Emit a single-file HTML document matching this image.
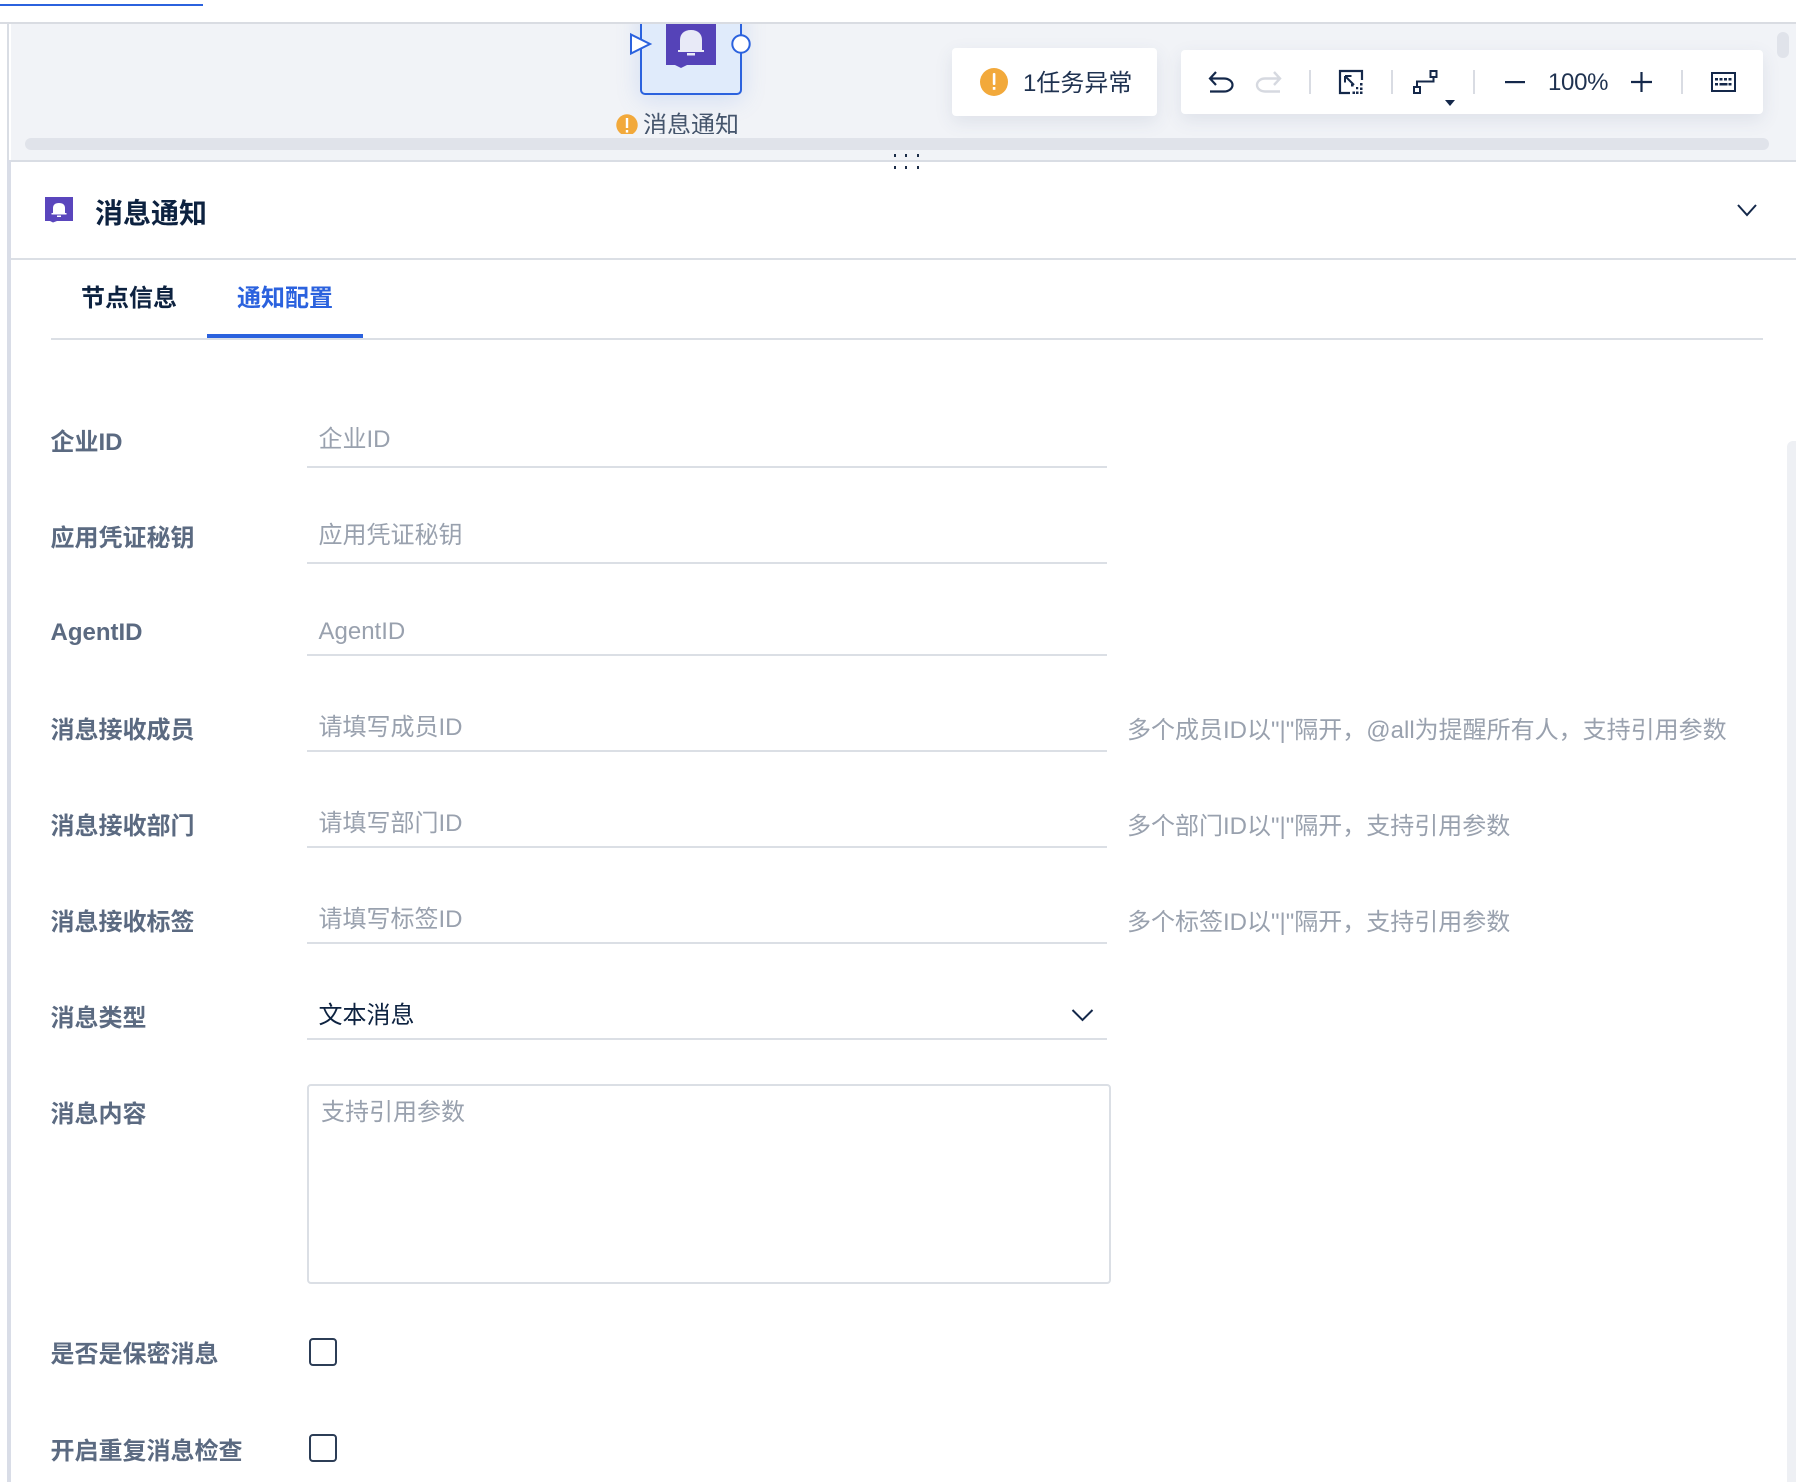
<!DOCTYPE html>
<html lang="zh">
<head>
<meta charset="utf-8">
<title>消息通知</title>
<style>
html,body{margin:0;padding:0;background:#fff}
#p{position:relative;width:1796px;height:1482px;overflow:hidden;background:#fff;font-family:"Liberation Sans","Noto Sans CJK SC",sans-serif;font-size:24px;color:#0d2240}
#p div{position:absolute}
.t{white-space:nowrap;line-height:30px;height:30px}
.l{left:50.500px;font-weight:700;color:#5b6a81}
.h{left:318.500px;color:#99a1ae}
.n{left:1127px;color:#99a1ae}
.u{left:307px;width:800px;height:2px;background:#dbdfe5}
.s{width:2px;height:24px;top:70px;background:#d9dce3}
.c{left:309px;width:24px;height:24px;border:2px solid #2c3d56;border-radius:4px;background:#fff}
</style>
</head>
<body>
<div id="p">
  <div style="left:0;top:4px;width:203px;height:2px;background:#2b62de"></div>
  <div style="left:0;top:22px;width:1796px;height:2px;background:#d9dce2"></div>
  <div style="left:7px;top:24px;width:2px;height:136px;background:#d9dde4"></div>
  <div style="left:9px;top:24px;width:2px;height:136px;background:#fff"></div>
  <div style="left:7px;top:160px;width:4px;height:1322px;background:#d9dde7"></div>

  <div style="left:11px;top:24px;width:1785px;height:136px;background:#f1f3f7;overflow:hidden">
    <div style="left:629px;top:-20px;width:98px;height:87px;background:#e0ebfb;border:2px solid #2b62de;border-radius:5px;box-shadow:0 4px 24px rgba(90,140,230,.22)"></div>
    <div class="t" style="left:632px;top:87px;height:23px;overflow:hidden;color:#45556c">消息通知</div>
    <div style="left:14px;top:114px;width:1744px;height:12px;border-radius:6px;background:#e0e3ea"></div>
    <div style="left:1766px;top:8px;width:12px;height:26px;border-radius:6px;background:#e0e3ea"></div>
    <div style="left:941px;top:24px;width:205px;height:68px;background:#fff;border-radius:4px;box-shadow:0 6px 18px rgba(60,80,120,.10)"></div>
    <div style="left:1170px;top:26px;width:582px;height:64px;background:#fff;border-radius:4px;box-shadow:0 6px 18px rgba(60,80,120,.10)"></div>
  </div>

  <svg style="position:absolute;left:0;top:0" width="1796" height="1482" viewBox="0 0 1796 1482" fill="none">
    <!-- node icon -->
    <path d="M666 24h50v41h-29l-6 3-6-3h-9z" fill="#5543b8"/>
    <path d="M680 50V40c0-6 4-10 11-10s11 4 11 10v10z" fill="#e8eaf7"/>
    <rect x="678" y="50" width="26" height="2" fill="#e8eaf7"/>
    <rect x="687" y="53" width="8" height="2.500" fill="#e8eaf7"/>
    <path d="M631 34.500L650 44 631 53.500z" fill="#fff" stroke="#2b62de" stroke-width="2"/>
    <circle cx="741" cy="44" r="8.700" fill="#fff" stroke="#2b62de" stroke-width="2"/>
    <!-- label warning -->
    <path d="M621.200 134a10.700 10.700 0 1 1 11.600 0z" fill="#f2a93b"/>
    <rect x="625.800" y="118" width="2.400" height="10" fill="#fff"/>
    <rect x="625.800" y="130" width="2.400" height="2.600" fill="#fff"/>
    <!-- drag dots -->
    <path d="M894 154h2v3h-2zM905 154h2v3h-2zM917 154h2v3h-2zM894 166h2v3h-2zM905 166h2v3h-2zM917 166h2v3h-2z" fill="#1b2c47"/>
    <!-- alert icon -->
    <circle cx="994" cy="82" r="14" fill="#f2a93b"/>
    <rect x="992.800" y="73" width="2.600" height="12" rx="1" fill="#fff"/>
    <rect x="992.800" y="87" width="2.600" height="2.800" fill="#fff"/>
    <!-- undo -->
    <path d="M1216 72l-6 6.500 6 6.500M1210 78.500h14a8.500 6.500 0 0 1 0 13h-14" stroke="#14284a" stroke-width="2.200"/>
    <!-- redo -->
    <path d="M1274 72l6 6.500-6 6.500M1280 78.500h-15a8 6.500 0 0 0 0 13h15" stroke="#d6d9e0" stroke-width="2.400"/>
    <!-- fit -->
    <path d="M1362 80V71h-22v22h10" stroke="#14284a" stroke-width="2.200"/>
    <path d="M1345 76l9 9M1345 76h6.500M1345 76v6.500" stroke="#14284a" stroke-width="2"/>
    <path d="M1351 84h2.500v2.500h-2.500zM1360 83h2.500v2.500h-2.500zM1360 87.500h2.500v2.500h-2.500zM1360 91.500h2.500v2.500h-2.500zM1356 91.500h2.500v2.500h-2.500zM1352.500 91.500h2.500v2.500h-2.500zM1356 87h2.200v2.200h-2.200z" fill="#14284a"/>
    <!-- route -->
    <rect x="1430.500" y="71" width="6" height="6" stroke="#14284a" stroke-width="2"/>
    <rect x="1414" y="87" width="6" height="6" stroke="#14284a" stroke-width="2"/>
    <path d="M1433.500 78v3.500h-16.500v4.500" stroke="#14284a" stroke-width="2"/>
    <path d="M1445 100h10l-5 6z" fill="#14284a"/>
    <!-- zoom -->
    <rect x="1505" y="81" width="20" height="2.200" fill="#14284a"/>
    <path d="M1631 82h21M1641.500 72v20" stroke="#14284a" stroke-width="2.200"/>
    <!-- keyboard -->
    <rect x="1712" y="73" width="23" height="18" stroke="#14284a" stroke-width="2"/>
    <path d="M1715 78h3v2.500h-3zM1719.500 78h3v2.500h-3zM1724 78h3v2.500h-3zM1728.500 78h3v2.500h-3zM1715 83h3v2.500h-3zM1719.500 83h8v2.500h-8zM1728.500 83h3v2.500h-3z" fill="#14284a"/>
    <!-- panel icon -->
    <path d="M45 197h28v24h-16l-4 1.500-3-1.500h-5z" fill="#5a46bd"/>
    <path d="M53 213v-5c0-3 2-5 6-5s6 2 6 5v5z" fill="#fff"/>
    <rect x="51.500" y="213" width="15" height="1.500" fill="#fff"/>
    <rect x="57" y="215.500" width="4" height="1.500" fill="#fff"/>
    <!-- panel chevron -->
    <path d="M1738 205l9 10 9-10" stroke="#14284a" stroke-width="2"/>
    <!-- select chevron -->
    <path d="M1072.500 1010l10 10 10-10" stroke="#14284a" stroke-width="2"/>
  </svg>

  <div class="t" style="left:1023px;top:69px;color:#1f3250">1任务异常</div>
  <div class="s" style="left:1309px"></div>
  <div class="s" style="left:1391px"></div>
  <div class="s" style="left:1473px"></div>
  <div class="s" style="left:1681px"></div>
  <div class="t" style="left:1548px;top:68px;color:#1f3250;letter-spacing:-.3px">100%</div>

  <div style="left:11px;top:160px;width:1785px;height:2px;background:#d9dde4"></div>
  <div class="t" style="left:95px;top:194px;height:40px;line-height:40px;font-size:28px;font-weight:700">消息通知</div>
  <div style="left:11px;top:258px;width:1785px;height:2px;background:#dbdfe5"></div>

  <div class="t" style="left:81px;top:284px;font-weight:700">节点信息</div>
  <div class="t" style="left:237px;top:284px;font-weight:700;color:#2b62de">通知配置</div>
  <div style="left:51px;top:338px;width:1712px;height:2px;background:#dbdfe5"></div>
  <div style="left:207px;top:334px;width:156px;height:4px;background:#2b62de"></div>

  <div class="t l" style="top:428px">企业ID</div>
  <div class="t h" style="top:425px">企业ID</div>
  <div class="u" style="top:466px"></div>

  <div class="t l" style="top:524px">应用凭证秘钥</div>
  <div class="t h" style="top:521px">应用凭证秘钥</div>
  <div class="u" style="top:562px"></div>

  <div class="t l" style="top:618px">AgentID</div>
  <div class="t h" style="top:617px">AgentID</div>
  <div class="u" style="top:654px"></div>

  <div class="t l" style="top:716px">消息接收成员</div>
  <div class="t h" style="top:713px">请填写成员ID</div>
  <div class="u" style="top:750px"></div>
  <div class="t n" style="top:716px">多个成员ID以"|"隔开，@all为提醒所有人，支持引用参数</div>

  <div class="t l" style="top:812px">消息接收部门</div>
  <div class="t h" style="top:809px">请填写部门ID</div>
  <div class="u" style="top:846px"></div>
  <div class="t n" style="top:812px">多个部门ID以"|"隔开，支持引用参数</div>

  <div class="t l" style="top:908px">消息接收标签</div>
  <div class="t h" style="top:905px">请填写标签ID</div>
  <div class="u" style="top:942px"></div>
  <div class="t n" style="top:908px">多个标签ID以"|"隔开，支持引用参数</div>

  <div class="t l" style="top:1004px">消息类型</div>
  <div class="t" style="left:318.500px;top:1001px">文本消息</div>
  <div class="u" style="top:1038px"></div>

  <div class="t l" style="top:1100px">消息内容</div>
  <div style="left:307px;top:1084px;width:800px;height:196px;border:2px solid #dbdfe5;border-radius:4px"></div>
  <div class="t h" style="left:321px;top:1098px">支持引用参数</div>

  <div class="t l" style="top:1340px">是否是保密消息</div>
  <div class="c" style="top:1338px"></div>

  <div class="t l" style="top:1437px">开启重复消息检查</div>
  <div class="c" style="top:1434px"></div>

  <div style="left:1787px;top:441px;width:9px;height:1041px;background:#eef0f4;border-radius:6px 0 0 0"></div>
</div>
</body>
</html>
